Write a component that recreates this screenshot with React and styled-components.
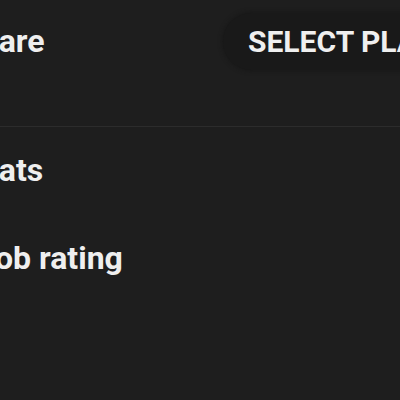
import React from 'react'
import styled, { createGlobalStyle } from 'styled-components'

const GlobalStyle = createGlobalStyle`
  html, body {
    margin: 0;
    padding: 0;
    background: #1e1e1e;
    overflow: hidden;
  }
  body {
    font-family: Roboto, "Liberation Sans", sans-serif;
    color: #efefef;
  }
`

const Screen = styled.div`
  width: 760px;
  margin-left: -37px;
  background: #1e1e1e;
  min-height: 400px;
`

const Header = styled.div`
  display: flex;
  align-items: center;
  justify-content: space-between;
  padding: 13px 0 56px;
  border-bottom: 1px solid #2c2c2c;
`

const Label = styled.p`
  margin: 0;
  font-size: 32px;
  line-height: 37px;
  font-weight: 700;
  white-space: nowrap;
  margin-left: ${props => props.$shift || 0}px;
`

const SelectButton = styled.button`
  display: flex;
  align-items: center;
  height: 57px;
  width: 500px;
  padding: 0 25px;
  border: none;
  border-radius: 29px 0 0 29px;
  background: #191919;
  box-shadow: 0 0 4px 1px rgba(20, 20, 20, 0.6);
  color: #efefef;
  font-family: inherit;
  font-size: 30px;
  font-weight: 700;
  text-transform: uppercase;
  white-space: nowrap;
`

const Row = styled.div`
  display: flex;
  align-items: center;
  padding: 25px 0 26px;
`

const App = () => {
  return (
    <>
      <GlobalStyle />
      <Screen>
        <Header>
          <Label $shift={-2}>Share</Label>
          <SelectButton>Select platform</SelectButton>
        </Header>
        <Row>
          <Label $shift={-3}>Chats</Label>
        </Row>
        <Row>
          <Label $shift={4}>Mob rating</Label>
        </Row>
      </Screen>
    </>
  )
}

export default App
